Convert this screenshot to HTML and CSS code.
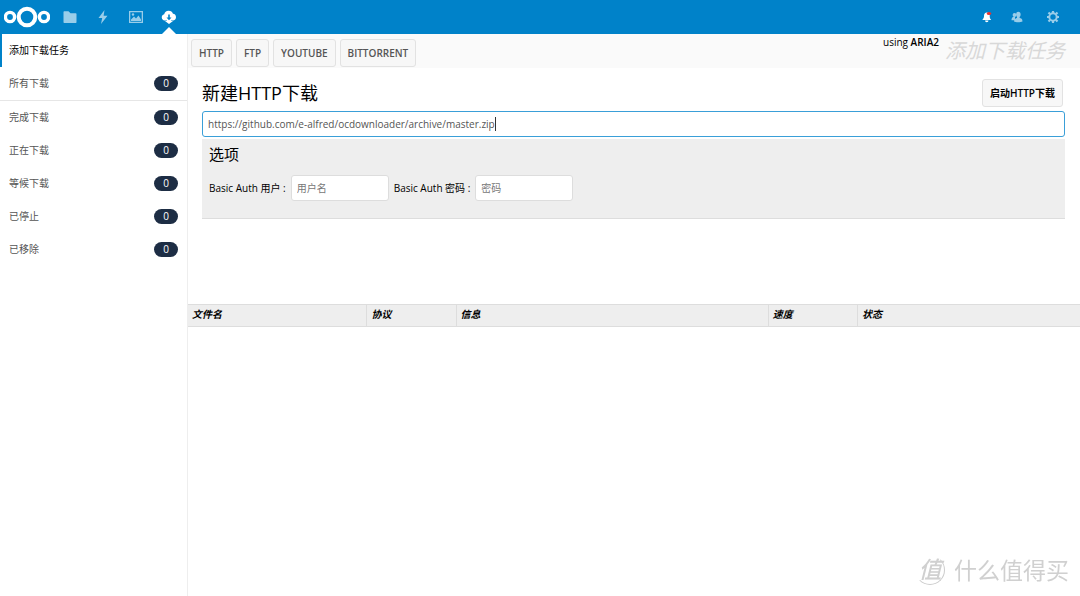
FILE: index.html
```html
<!DOCTYPE html>
<html lang="zh-CN">
<head>
<meta charset="utf-8">
<title>添加下载任务</title>
<link rel="stylesheet" href="styles.css">
</head>
<body>
<header class="topbar">
  <a class="logo" href="#" aria-label="Nextcloud">
    <svg width="46" height="22" viewBox="0 0 46 22" fill="none" stroke="#fff"><circle cx="23" cy="11" r="8.300" stroke-width="4"/><circle cx="6" cy="11" r="4.600" stroke-width="3.400"/><circle cx="40" cy="11" r="4.600" stroke-width="3.400"/></svg>
  </a>
  <nav class="apps">
    <a href="#" aria-label="文件"><svg width="14" height="14" viewBox="0 0 14 14" fill="#fff"><path d="M.5 2q0-.7.700-.7h4.300l2 2h5.300q.700 0 .7.700v8.300q0 .7-.7.700H1.200q-.7 0-.7-.7z"/></svg></a>
    <a href="#" aria-label="动态"><svg width="14" height="14" viewBox="0 0 14 14" fill="#fff"><path d="M8.500 0 2.500 8h3.700L5 14l6.500-8.200H7.600z"/></svg></a>
    <a href="#" aria-label="图库"><svg width="14" height="14" viewBox="0 0 14 14" fill="#fff"><path fill-rule="evenodd" d="M0 1h14v12H0zM1.300 2.300v9.400h11.400V2.300z"/><path d="M2 11V9.500l3-3 2 2L9.500 5.500 12 9.500V11z"/><circle cx="4" cy="4.500" r="1.200"/></svg></a>
    <a class="current" href="#" aria-label="下载"><svg width="16" height="14" viewBox="0 0 16 14"><path fill="#fff" d="M3.700 10.500a3.200 3.200 0 0 1-.5-6.300A4.600 4.600 0 0 1 12 3.800a3.400 3.400 0 0 1 .3 6.700z"/><path fill="#fff" d="M6 8h4v3h2l-4 3-4-3h2z"/><path fill="#0082c9" d="M7.200 4.500h1.600v3h1.700L8 10.300 5.500 7.500h1.700z"/></svg></a>
  </nav>
  <nav class="tools">
    <a class="bell" href="#" aria-label="通知"><svg width="10" height="12" viewBox="0 0 10 12"><path fill="#fff" d="M4.500 1.500C2.300 2 2 3.500 2 5.500 2 7.200.8 8 .3 9h8.900c-.8-1-1.500-2-1.500-3.500V2zM3 9.500h3.500a1.700 1.700 0 0 1-3.500 0z"/><ellipse cx="7" cy="2.500" rx="2.200" ry="1.600" fill="#e9322d"/></svg></a>
    <a href="#" aria-label="联系人"><svg width="12" height="12" viewBox="0 0 12 12" fill="#fff"><circle cx="3.500" cy="4" r="1.900"/><path d="M.5 9.200c0-2.700 1.300-3.700 3.500-3.400v3.400z"/><ellipse cx="7.300" cy="3.500" rx="2.300" ry="2.700"/><path d="M3 10.500c0-2.500 1.800-3.200 3-3.500V5.500h2.600V7c1.500.2 2.900.8 2.900 3.500-2 1-6.500 1-8.500 0z"/></svg></a>
    <a href="#" aria-label="设置"><svg width="12" height="12" viewBox="0 0 12 12" fill="none" stroke="#fff"><circle cx="6" cy="6" r="3.700" stroke-width="2"/><path stroke-width="2.200" d="M6 0v2M6 10v2M0 6h2M10 6h2M1.500 1.500l1.500 1.500M9 9l1.500 1.500M10.500 1.500 9 3M3 9l-1.500 1.500"/></svg></a>
  </nav>
</header>
<div class="layout">
  <nav class="sidebar">
    <a class="item active" href="#">添加下载任务</a>
    <a class="item divided" href="#">所有下载<span class="count">0</span></a>
    <a class="item" href="#">完成下载<span class="count">0</span></a>
    <a class="item" href="#">正在下载<span class="count">0</span></a>
    <a class="item" href="#">等候下载<span class="count">0</span></a>
    <a class="item" href="#">已停止<span class="count">0</span></a>
    <a class="item" href="#">已移除<span class="count">0</span></a>
  </nav>
  <main class="content">
    <div class="controls">
      <button class="button" type="button">HTTP</button>
      <button class="button" type="button">FTP</button>
      <button class="button" type="button">YOUTUBE</button>
      <button class="button" type="button">BITTORRENT</button>
      <span class="engine">using <b>ARIA2</b></span>
      <h1 class="page-title">添加下载任务</h1>
    </div>
    <form class="download">
      <div class="download-head">
        <h2 class="heading">新建HTTP下载</h2>
        <button class="button launch" type="button">启动HTTP下载</button>
      </div>
      <div class="url-box">
        <input class="field url" type="text" aria-label="下载地址" value="https://github.com/e-alfred/ocdownloader/archive/master.zip">
        <span class="caret"></span>
      </div>
      <section class="options">
        <h3 class="subheading">选项</h3>
        <div class="auth">
          <label for="user">Basic Auth 用户 :</label>
          <input class="field" id="user" type="text" placeholder="用户名">
          <label for="pass">Basic Auth 密码 :</label>
          <input class="field" id="pass" type="password" placeholder="密码">
        </div>
      </section>
    </form>
    <table class="queue">
      <thead><tr><th class="name">文件名</th><th class="protocol">协议</th><th class="info">信息</th><th class="speed">速度</th><th class="status">状态</th></tr></thead>
    </table>
  </main>
</div>
<div class="watermark"><span class="seal">值</span><span>什么值得买</span></div>
</body>
</html>
```

FILE: styles.css
```css
* { box-sizing: border-box; }
body {
  margin: 0;
  min-height: 100vh;
  display: flex;
  flex-direction: column;
  background: #fff;
  color: #000;
  font: 10px/16px "Open Sans", "Noto Sans CJK SC", sans-serif;
}
a { color: inherit; text-decoration: none; }
svg { display: block; }
h1, h2, h3 { margin: 0; font-weight: 400; }
input, button { font: inherit; }

.topbar {
  display: flex;
  align-items: center;
  height: 34px;
  padding-left: 4px;
  background: #0082c9;
}
.apps { display: flex; align-self: stretch; margin-left: 3px; }
.apps a {
  position: relative;
  width: 33px;
  display: flex;
  align-items: center;
  justify-content: center;
}
.apps svg { opacity: .6; }
.apps .current svg { opacity: 1; }
.apps .current::after {
  content: "";
  position: absolute;
  bottom: 0;
  left: 10px;
  border: 7px solid transparent;
  border-top: 0;
  border-bottom-color: #fff;
}
.tools { display: flex; align-items: center; gap: 24px; margin-left: auto; padding-right: 21px; }
.tools svg { opacity: .6; }
.tools a:first-child { margin-right: -5px; }
.tools .bell svg { opacity: 1; }

.layout { flex: 1; display: flex; }
.sidebar { flex: none; width: 188px; border-right: 1px solid #eee; }
.item {
  display: flex;
  align-items: center;
  justify-content: space-between;
  height: 33px;
  padding: 0 9px 1px;
  color: #555;
}
.active { padding-left: 7px; border-left: 2px solid #0082c9; color: #000; }
.divided { height: 34px; border-bottom: 1px solid #e6e6e6; }
.count {
  width: 24px;
  border-radius: 8px;
  background: #1d2d44;
  color: #fff;
  text-align: center;
  line-height: 15px;
}

.content { flex: 1; min-width: 0; }
.controls {
  display: flex;
  align-items: center;
  gap: 4px;
  height: 34px;
  padding: 4px 15px 0 3px;
  background: #fafafa;
}
.button {
  height: 28px;
  padding: 0 7px;
  border: 1px solid #e2e2e2;
  border-radius: 3px;
  background: #f7f7f7;
  color: #555;
  font-weight: 600;
}
.engine { margin-left: auto; align-self: flex-start; line-height: 8px; }
.engine b { font-weight: 600; }
.page-title { margin-left: 2px; color: #d8d8d8; font-size: 20px; font-style: italic; line-height: 24px; padding-bottom: 4px; }

.download { padding: 11px 15px 0 14px; }
.download-head { display: flex; align-items: center; justify-content: space-between; padding-right: 2px; }
.heading { font-size: 18px; line-height: 28px; }
.launch { color: #000; }
.field {
  width: 98px;
  height: 26px;
  padding: 0 5px;
  border: 1px solid #ddd;
  border-radius: 3px;
  outline: 0;
  background: #fff;
  color: #555;
}
.field::placeholder { color: #777; }
.url-box { position: relative; margin-top: 4px; }
.url { display: block; width: 100%; border-color: #3a9fd8; }
.caret { position: absolute; top: 6px; left: 293px; width: 1px; height: 14px; background: #333; }
.options {
  margin-top: 2px;
  padding: 5px 7px 17px;
  border-bottom: 1px solid #ddd;
  background: #eee;
}
.subheading { font-size: 15px; line-height: 20px; }
.auth { display: flex; align-items: center; gap: 5px; margin-top: 11px; }

.queue { width: 100%; margin-top: 85px; border-spacing: 0; table-layout: fixed; }
.queue th {
  height: 23px;
  padding: 0 4px 2px;
  border: solid #ddd;
  border-width: 1px 0 1px 1px;
  background: #eee;
  text-align: left;
  font-style: italic;
  font-weight: 700;
  line-height: 15px;
}
.queue th:first-child { border-left: 0; }
.name { width: 20%; }
.protocol, .speed { width: 10%; }
.info { width: 35%; }
.status { width: 25%; }

.watermark {
  position: fixed;
  right: 11px;
  bottom: 11px;
  display: flex;
  align-items: center;
  gap: 9px;
  color: #d0d0d0;
  font-size: 23px;
  line-height: 30px;
}
.seal {
  width: 30px;
  height: 30px;
  border: 1px solid transparent;
  border-right-color: #ccc;
  border-bottom-color: #ccc;
  border-radius: 50%;
  text-align: center;
  line-height: 26px;
  font-weight: 500;
  font-style: italic;
}
```
